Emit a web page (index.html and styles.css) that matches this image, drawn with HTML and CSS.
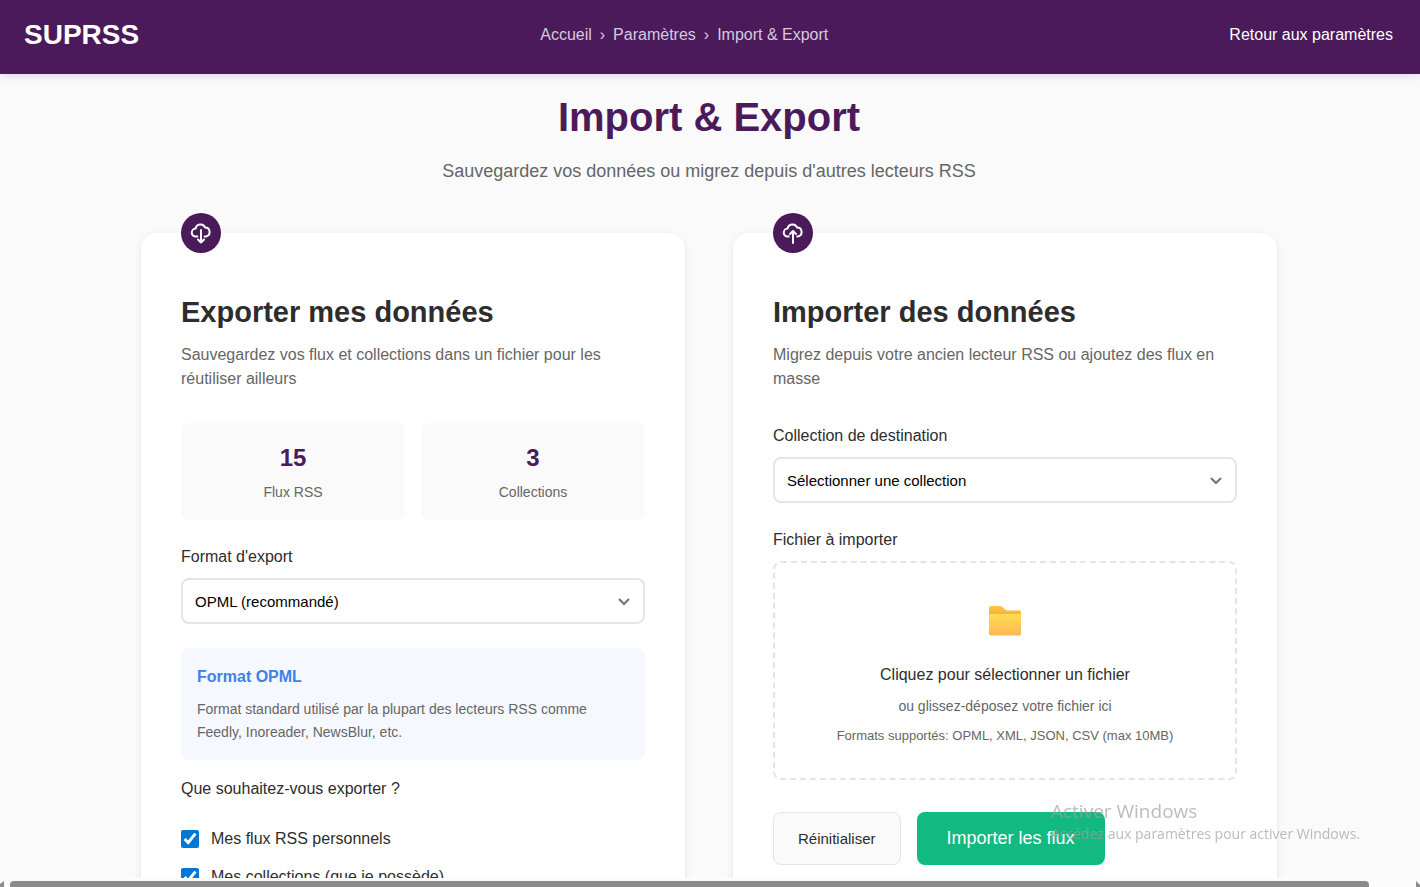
FILE: index.html
```html
<!DOCTYPE html>
<html lang="fr">
<head>
<meta charset="utf-8">
<meta name="viewport" content="width=device-width, initial-scale=1">
<title>SUPRSS – Import &amp; Export</title>
<link rel="stylesheet" href="styles.css">
</head>
<body>
<header class="topbar">
  <a class="logo" href="#">SUPRSS</a>
  <nav class="breadcrumb" aria-label="Fil d'Ariane">
    <a href="#">Accueil</a><span>›</span><a href="#">Paramètres</a><span>›</span><span>Import &amp; Export</span>
  </nav>
  <a class="back" href="#">Retour aux paramètres</a>
</header>

<main class="page">
  <div class="container">
    <h1 class="title">Import &amp; Export</h1>
    <p class="subtitle">Sauvegardez vos données ou migrez depuis d'autres lecteurs RSS</p>

    <div class="cards">
      <section class="card">
        <div class="badge">
          <svg class="badge-icon" viewBox="0 0 22 22" aria-hidden="true">
            <path d="M7.400 14.500H5.800A3.800 3.800 0 0 1 5.600 6.600A5 5 0 0 1 15.200 5.600A4.500 4.500 0 0 1 16 14.500H14.600"/>
            <path d="M11 8V20.500M8 17.500l3 3 3-3"/>
          </svg>
        </div>
        <h2 class="card-title">Exporter mes données</h2>
        <p class="card-text">Sauvegardez vos flux et collections dans un fichier pour les réutiliser ailleurs</p>

        <div class="stats">
          <div class="stat"><div class="stat-value">15</div><div class="stat-label">Flux RSS</div></div>
          <div class="stat"><div class="stat-value">3</div><div class="stat-label">Collections</div></div>
        </div>

        <div class="field">
          <label class="label" for="format">Format d'export</label>
          <div class="select-wrap">
            <select class="select" id="format"><option>OPML (recommandé)</option><option>JSON</option><option>CSV</option></select>
            <svg class="chevron" viewBox="0 0 12 8" aria-hidden="true"><path d="M1 1l5 5 5-5"/></svg>
          </div>
        </div>

        <div class="info">
          <h3 class="info-title">Format OPML</h3>
          <p class="info-text">Format standard utilisé par la plupart des lecteurs RSS comme Feedly, Inoreader, NewsBlur, etc.</p>
        </div>

        <fieldset class="choices">
          <legend class="label">Que souhaitez-vous exporter ?</legend>
          <label class="choice"><input class="check" type="checkbox" checked>Mes flux RSS personnels</label>
          <label class="choice"><input class="check" type="checkbox" checked>Mes collections (que je possède)</label>
        </fieldset>
      </section>

      <section class="card">
        <div class="badge">
          <svg class="badge-icon" viewBox="0 0 22 22" aria-hidden="true">
            <path d="M6.800 14.500H5.800A3.800 3.800 0 0 1 5.600 6.600A5 5 0 0 1 15.200 5.600A4.500 4.500 0 0 1 16 14.500H15.200"/>
            <path d="M11 21V9M8 12l3-3 3 3"/>
          </svg>
        </div>
        <h2 class="card-title">Importer des données</h2>
        <p class="card-text">Migrez depuis votre ancien lecteur RSS ou ajoutez des flux en masse</p>

        <div class="field">
          <label class="label" for="collection">Collection de destination</label>
          <div class="select-wrap">
            <select class="select" id="collection"><option>Sélectionner une collection</option></select>
            <svg class="chevron" viewBox="0 0 12 8" aria-hidden="true"><path d="M1 1l5 5 5-5"/></svg>
          </div>
        </div>

        <div class="field">
          <label class="label" for="file">Fichier à importer</label>
          <label class="dropzone">
            <input class="file" id="file" type="file">
            <svg class="folder" viewBox="0 0 32 30" aria-hidden="true">
              <defs>
                <linearGradient id="front" x1="0" y1="0" x2="0" y2="1"><stop offset="0" stop-color="#ffdc50"/><stop offset="1" stop-color="#ffb757"/></linearGradient>
                <linearGradient id="back" x1="0" y1="0" x2="0" y2="1"><stop offset="0" stop-color="#ffc843"/><stop offset=".35" stop-color="#f8b43e"/></linearGradient>
              </defs>
              <path fill="url(#back)" d="M0 2Q0 0 2 0H11Q12.500 0 13.500 1L16 3.500Q17 4.500 18.500 4.500H31Q32 4.500 32 5.500V20H0Z"/>
              <path fill="url(#front)" d="M0 8H31Q32 8 32 9V28Q32 29.500 30.500 29.500H2Q0 29.500 0 27.500Z"/>
            </svg>
            <span class="drop-main">Cliquez pour sélectionner un fichier</span>
            <span class="drop-sub">ou glissez-déposez votre fichier ici</span>
            <span class="drop-formats">Formats supportés: OPML, XML, JSON, CSV (max 10MB)</span>
          </label>
        </div>

        <div class="actions">
          <button class="btn btn-reset" type="button">Réinitialiser</button>
          <button class="btn btn-import" type="button">Importer les flux</button>
        </div>
      </section>
    </div>
  </div>
</main>

<div class="scrollbar" aria-hidden="true">
  <svg class="scroll-arrow" viewBox="0 0 4 6"><path d="M4 0v6H0V3z"/></svg>
  <div class="scroll-thumb"></div>
  <svg class="scroll-arrow" viewBox="0 0 4 6"><path d="M0 0v6h4V4z"/></svg>
</div>

<aside class="watermark">
  <p class="watermark-title">Activer Windows</p>
  <p class="watermark-text">Accédez aux paramètres pour activer Windows.</p>
</aside>
</body>
</html>
```

FILE: styles.css
```css
* {
  box-sizing: border-box;
}

body {
  margin: 0;
  height: 100vh;
  display: flex;
  flex-direction: column;
  overflow: hidden;
  background: #fafafa;
  color: #2d2d2d;
  font: 16px/24px "Liberation Sans", Arial, sans-serif;
}

h1, h2, h3, p {
  margin: 0;
}

a {
  color: inherit;
  text-decoration: none;
}

.topbar {
  position: relative;
  flex: none;
  display: flex;
  justify-content: space-between;
  align-items: center;
  padding: 17px 27px 21px 24px;
  background: #4b1a5b;
  color: #fff;
  box-shadow: 0 2px 8px rgba(0, 0, 0, 0.12);
}

.logo {
  font-size: 28px;
  line-height: 36px;
  font-weight: 700;
}

.breadcrumb {
  display: flex;
  gap: 8px;
  color: #d8c9de;
}

.page {
  flex: 1;
  min-height: 0;
  overflow: hidden;
  padding-right: 2px;
}

.container {
  max-width: 1200px;
  margin: 0 auto;
  padding: 19px 32px 48px;
}

.title {
  margin-bottom: 16px;
  color: #4b1a5b;
  font-size: 40px;
  line-height: 48px;
  text-align: center;
}

.subtitle {
  margin-bottom: 48px;
  color: #666;
  font-size: 18px;
  line-height: 28px;
  text-align: center;
}

.cards {
  display: grid;
  grid-template-columns: 1fr 1fr;
  gap: 48px;
}

.card {
  position: relative;
  padding: 56px 40px 40px;
  border-radius: 16px;
  background: #fff;
  box-shadow: 0 2px 8px rgba(0, 0, 0, 0.08);
}

.badge {
  position: absolute;
  top: -20px;
  left: 40px;
  width: 40px;
  height: 40px;
  display: grid;
  place-items: center;
  border-radius: 50%;
  background: #4b1a5b;
}

.badge-icon {
  width: 22px;
  height: 22px;
  overflow: visible;
  fill: none;
  stroke: #fff;
  stroke-width: 2;
  stroke-linecap: round;
  stroke-linejoin: round;
}

.card-title {
  margin-bottom: 8px;
  font-size: 29px;
  line-height: 46px;
}

.card-text {
  margin-bottom: 32px;
  color: #666;
}

.stats {
  display: grid;
  grid-template-columns: 1fr 1fr;
  gap: 16px;
  margin-bottom: 24px;
}

.stat {
  padding: 16px;
  border-radius: 8px;
  background: #fafafa;
  text-align: center;
}

.stat-value {
  margin-bottom: 4px;
  color: #4b1a5b;
  font-size: 24px;
  line-height: 38px;
  font-weight: 700;
}

.stat-label {
  color: #666;
  font-size: 14px;
  line-height: 23px;
}

.field {
  margin-bottom: 24px;
}

.label {
  display: block;
  margin-bottom: 8px;
  padding: 0;
  line-height: 26px;
}

.select-wrap {
  position: relative;
}

.select {
  display: block;
  width: 100%;
  height: 46px;
  padding: 0 40px 0 12px;
  border: 2px solid #e5e5e5;
  border-radius: 8px;
  appearance: none;
  background: #fff;
  color: #000;
  font: 15px "Liberation Sans", Arial, sans-serif;
}

.chevron {
  position: absolute;
  right: 15px;
  top: 20px;
  width: 12px;
  height: 8px;
  fill: none;
  stroke: #6b7280;
  stroke-width: 2;
  pointer-events: none;
}

.info {
  margin-bottom: 16px;
  padding: 16px;
  border-radius: 8px;
  background: #f5f8ff;
}

.info-title {
  margin-bottom: 8px;
  color: #4180e8;
  font-size: 16px;
  line-height: 26px;
}

.info-text {
  color: #666;
  font-size: 14px;
  line-height: 23px;
}

.choices {
  display: grid;
  gap: 14px;
  margin: 0;
  padding: 17px 0 0;
  border: 0;
}

.choice {
  display: flex;
  align-items: center;
  gap: 12px;
}

.check {
  width: 18px;
  height: 18px;
  margin: 0;
  accent-color: #0078d4;
}

.dropzone {
  display: flex;
  flex-direction: column;
  align-items: center;
  padding: 43px 32px 32px;
  border: 2px dashed #e5e5e5;
  border-radius: 8px;
  cursor: pointer;
}

.file {
  position: absolute;
  width: 1px;
  height: 1px;
  opacity: 0;
}

.folder {
  width: 32px;
  height: 30px;
  margin-bottom: 27px;
}

.drop-main {
  margin-bottom: 8px;
}

.drop-sub {
  margin-bottom: 9px;
  color: #666;
  font-size: 14px;
  line-height: 22px;
}

.drop-formats {
  color: #666;
  font-size: 13px;
  line-height: 20px;
}

.actions {
  display: flex;
  gap: 16px;
  padding-top: 8px;
}

.btn {
  height: 53px;
  border-radius: 8px;
  font-family: "Liberation Sans", Arial, sans-serif;
}

.btn-reset {
  padding: 0 24px;
  border: 1px solid #e5e5e5;
  background: #fafafa;
  color: #2d2d2d;
  font-size: 15px;
}

.btn-import {
  padding: 0 30px;
  border: 0;
  background: #12b981;
  color: #fff;
  font-size: 18px;
}

.scrollbar {
  flex: none;
  display: flex;
  gap: 6px;
  height: 9px;
  padding-top: 3px;
  background: #fcfcfc;
}

.scroll-thumb {
  flex: 1;
  margin-right: 41px;
  border-radius: 4px 4px 0 0;
  background: #8b8b8b;
}

.scroll-arrow {
  width: 4px;
  height: 6px;
  fill: #8b8b8b;
}

.watermark {
  position: fixed;
  right: 60px;
  bottom: 43px;
  color: rgba(160, 160, 160, 0.7);
  font-family: "Open Sans", "Noto Sans", sans-serif;
  pointer-events: none;
}

.watermark-title {
  font-size: 19px;
  line-height: 26px;
}

.watermark-text {
  font-size: 14px;
  line-height: 20px;
}
```
